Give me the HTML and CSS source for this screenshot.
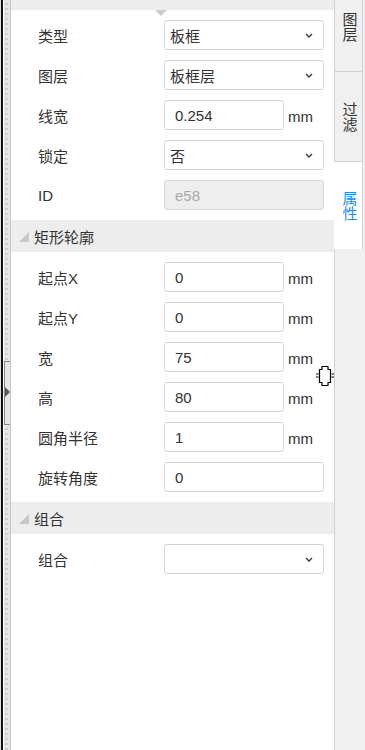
FILE: index.html
```html
<!DOCTYPE html>
<html lang="zh-CN">

<head>
  <meta charset="UTF-8">
  <meta name="viewport" content="width=device-width, initial-scale=1.0">
  <title>属性</title>
  <link rel="stylesheet" href="styles.css">
</head>

<body>
  <div class="layout">
    <div class="splitter">
      <span class="toggler"></span>
    </div>

    <div class="panel">
      <div class="panel-top"></div>

      <div class="rows">
        <div class="row">
          <label>类型</label>
          <div class="select"><span>板框</span><svg class="chev" width="8" height="5" viewBox="0 0 8 5"><path d="M1 1l3 3 3-3" fill="none" stroke="#333" stroke-width="1.3"/></svg></div>
        </div>
        <div class="row">
          <label>图层</label>
          <div class="select"><span>板框层</span><svg class="chev" width="8" height="5" viewBox="0 0 8 5"><path d="M1 1l3 3 3-3" fill="none" stroke="#333" stroke-width="1.3"/></svg></div>
        </div>
        <div class="row">
          <label>线宽</label>
          <input class="field short" type="text" value="0.254">
          <span class="unit">mm</span>
        </div>
        <div class="row">
          <label>锁定</label>
          <div class="select"><span>否</span><svg class="chev" width="8" height="5" viewBox="0 0 8 5"><path d="M1 1l3 3 3-3" fill="none" stroke="#333" stroke-width="1.3"/></svg></div>
        </div>
        <div class="row">
          <label>ID</label>
          <input class="field" type="text" value="e58" disabled>
        </div>
      </div>

      <div class="section-head">
        <svg class="tri" width="12" height="12" viewBox="0 0 12 12"><path d="M11 1v10H1z" fill="#c8c8c8"/></svg>
        <span>矩形轮廓</span>
      </div>

      <div class="rows">
        <div class="row">
          <label>起点X</label>
          <input class="field short" type="text" value="0">
          <span class="unit">mm</span>
        </div>
        <div class="row">
          <label>起点Y</label>
          <input class="field short" type="text" value="0">
          <span class="unit">mm</span>
        </div>
        <div class="row">
          <label>宽</label>
          <input class="field short" type="text" value="75">
          <span class="unit">mm</span>
        </div>
        <div class="row">
          <label>高</label>
          <input class="field short" type="text" value="80">
          <span class="unit">mm</span>
        </div>
        <div class="row">
          <label>圆角半径</label>
          <input class="field short" type="text" value="1">
          <span class="unit">mm</span>
        </div>
        <div class="row">
          <label>旋转角度</label>
          <input class="field" type="text" value="0">
        </div>
      </div>

      <div class="section-head">
        <svg class="tri" width="12" height="12" viewBox="0 0 12 12"><path d="M11 1v10H1z" fill="#c8c8c8"/></svg>
        <span>组合</span>
      </div>

      <div class="rows">
        <div class="row">
          <label>组合</label>
          <div class="select"><span></span><svg class="chev" width="8" height="5" viewBox="0 0 8 5"><path d="M1 1l3 3 3-3" fill="none" stroke="#333" stroke-width="1.3"/></svg></div>
        </div>
      </div>

      <!-- mouse cursor caught in the shot -->
      <svg class="cursor" width="20" height="22" viewBox="0 0 20 22">
        <path d="M7 1.5h6v3h2.5v13H13v3H7v-3H4.5v-13H7z" fill="#fff" stroke="#000" stroke-width="1.2" stroke-linejoin="round"/>
        <path d="M1 9h2.5M1 12h2.5M16.5 9H19M16.5 12H19" stroke="#000" stroke-width="1"/>
      </svg>
    </div>

    <div class="tabs">
      <div class="tab first">图层</div>
      <div class="tab">过滤</div>
      <div class="tab active">属性</div>
    </div>
  </div>
</body>

</html>
```

FILE: styles.css
```css
html,
body {
  margin: 0;
  padding: 0;
  height: 100%;
}

body {
  font-family: "Liberation Sans", "Noto Sans CJK SC", sans-serif;
  font-size: 15px;
  color: #333;
  background: #fff;
}

.layout {
  display: flex;
  height: 750px;
  overflow: hidden;
}

/* left drag bar */
.splitter {
  position: relative;
  width: 11px;
  flex: none;
  background:
    repeating-linear-gradient(to bottom, #cdcdcd 0 2px, transparent 2px 5px) 5px 3px / 3px 100% no-repeat,
    linear-gradient(to right, #ddd 0 1px, #111 1px 3px, #fff 3px 4px, #e6e6e6 4px 10px, #c9c9c9 10px 11px);
}

.toggler {
  position: absolute;
  left: 4px;
  top: 361px;
  width: 5px;
  height: 62px;
  border: 1px solid #8d8088;
  border-right: none;
  background: #e6e6e6;
}

.toggler::after {
  content: "";
  position: absolute;
  left: 0;
  top: 25px;
  border-top: 5px solid transparent;
  border-bottom: 5px solid transparent;
  border-left: 5px solid #5a5458;
}

.panel {
  position: relative;
  width: 323px;
  flex: none;
  background: #fff;
}

.panel-top {
  position: relative;
  height: 10px;
  background: #ededed;
}

.panel-top::after {
  content: "";
  position: absolute;
  left: 144px;
  top: 10px;
  border-left: 6.5px solid transparent;
  border-right: 6.5px solid transparent;
  border-top: 6px solid #cbcbcb;
}

.rows {
  display: flex;
  flex-direction: column;
  gap: 10px;
  padding: 10px 0;
}

.row {
  display: flex;
  align-items: center;
  height: 30px;
  padding-left: 27px;
}

.row label {
  width: 126px;
  flex: none;
}

.select,
.field {
  box-sizing: border-box;
  width: 160px;
  height: 30px;
  border: 1px solid #d3d3d3;
  border-radius: 3px;
  background: #fff;
  color: #333;
  font: inherit;
}

.select {
  display: flex;
  align-items: center;
  justify-content: space-between;
  padding: 0 10px 0 5px;
}

.chev {
  margin-top: 1px;
}

.field {
  padding: 0 10px;
  outline: none;
}

.field.short {
  width: 120px;
}

.field:disabled {
  background: #eee;
  border-color: #d8d8d8;
  color: #a9a9a9;
}

.unit {
  margin-left: 4px;
  margin-top: 3px;
}

.section-head {
  display: flex;
  align-items: center;
  height: 32px;
  padding-left: 7px;
  background: #ededed;
}

.section-head .tri {
  margin-right: 4px;
  margin-top: 1px;
}

.cursor {
  position: absolute;
  left: 304px;
  top: 365px;
}

/* right tab strip */
.tabs {
  flex: 1;
  border-left: 1px solid #d2d2d2;
  background: #f0f0f0;
}

.tab {
  box-sizing: border-box;
  width: 28px;
  height: 90px;
  display: flex;
  align-items: center;
  justify-content: center;
  writing-mode: vertical-rl;
  line-height: 28px;
  border-right: 1px solid #d2d2d2;
  border-bottom: 1px solid #d2d2d2;
  color: #333;
}

.tab.first {
  height: 72px;
  justify-content: flex-start;
  padding-top: 12px;
}

.tab.active {
  height: 87px;
  margin-left: -1px;
  width: 29px;
  padding-left: 1px;
  background: #fff;
  color: #1e8cf5;
  border-bottom: none;
}
```
